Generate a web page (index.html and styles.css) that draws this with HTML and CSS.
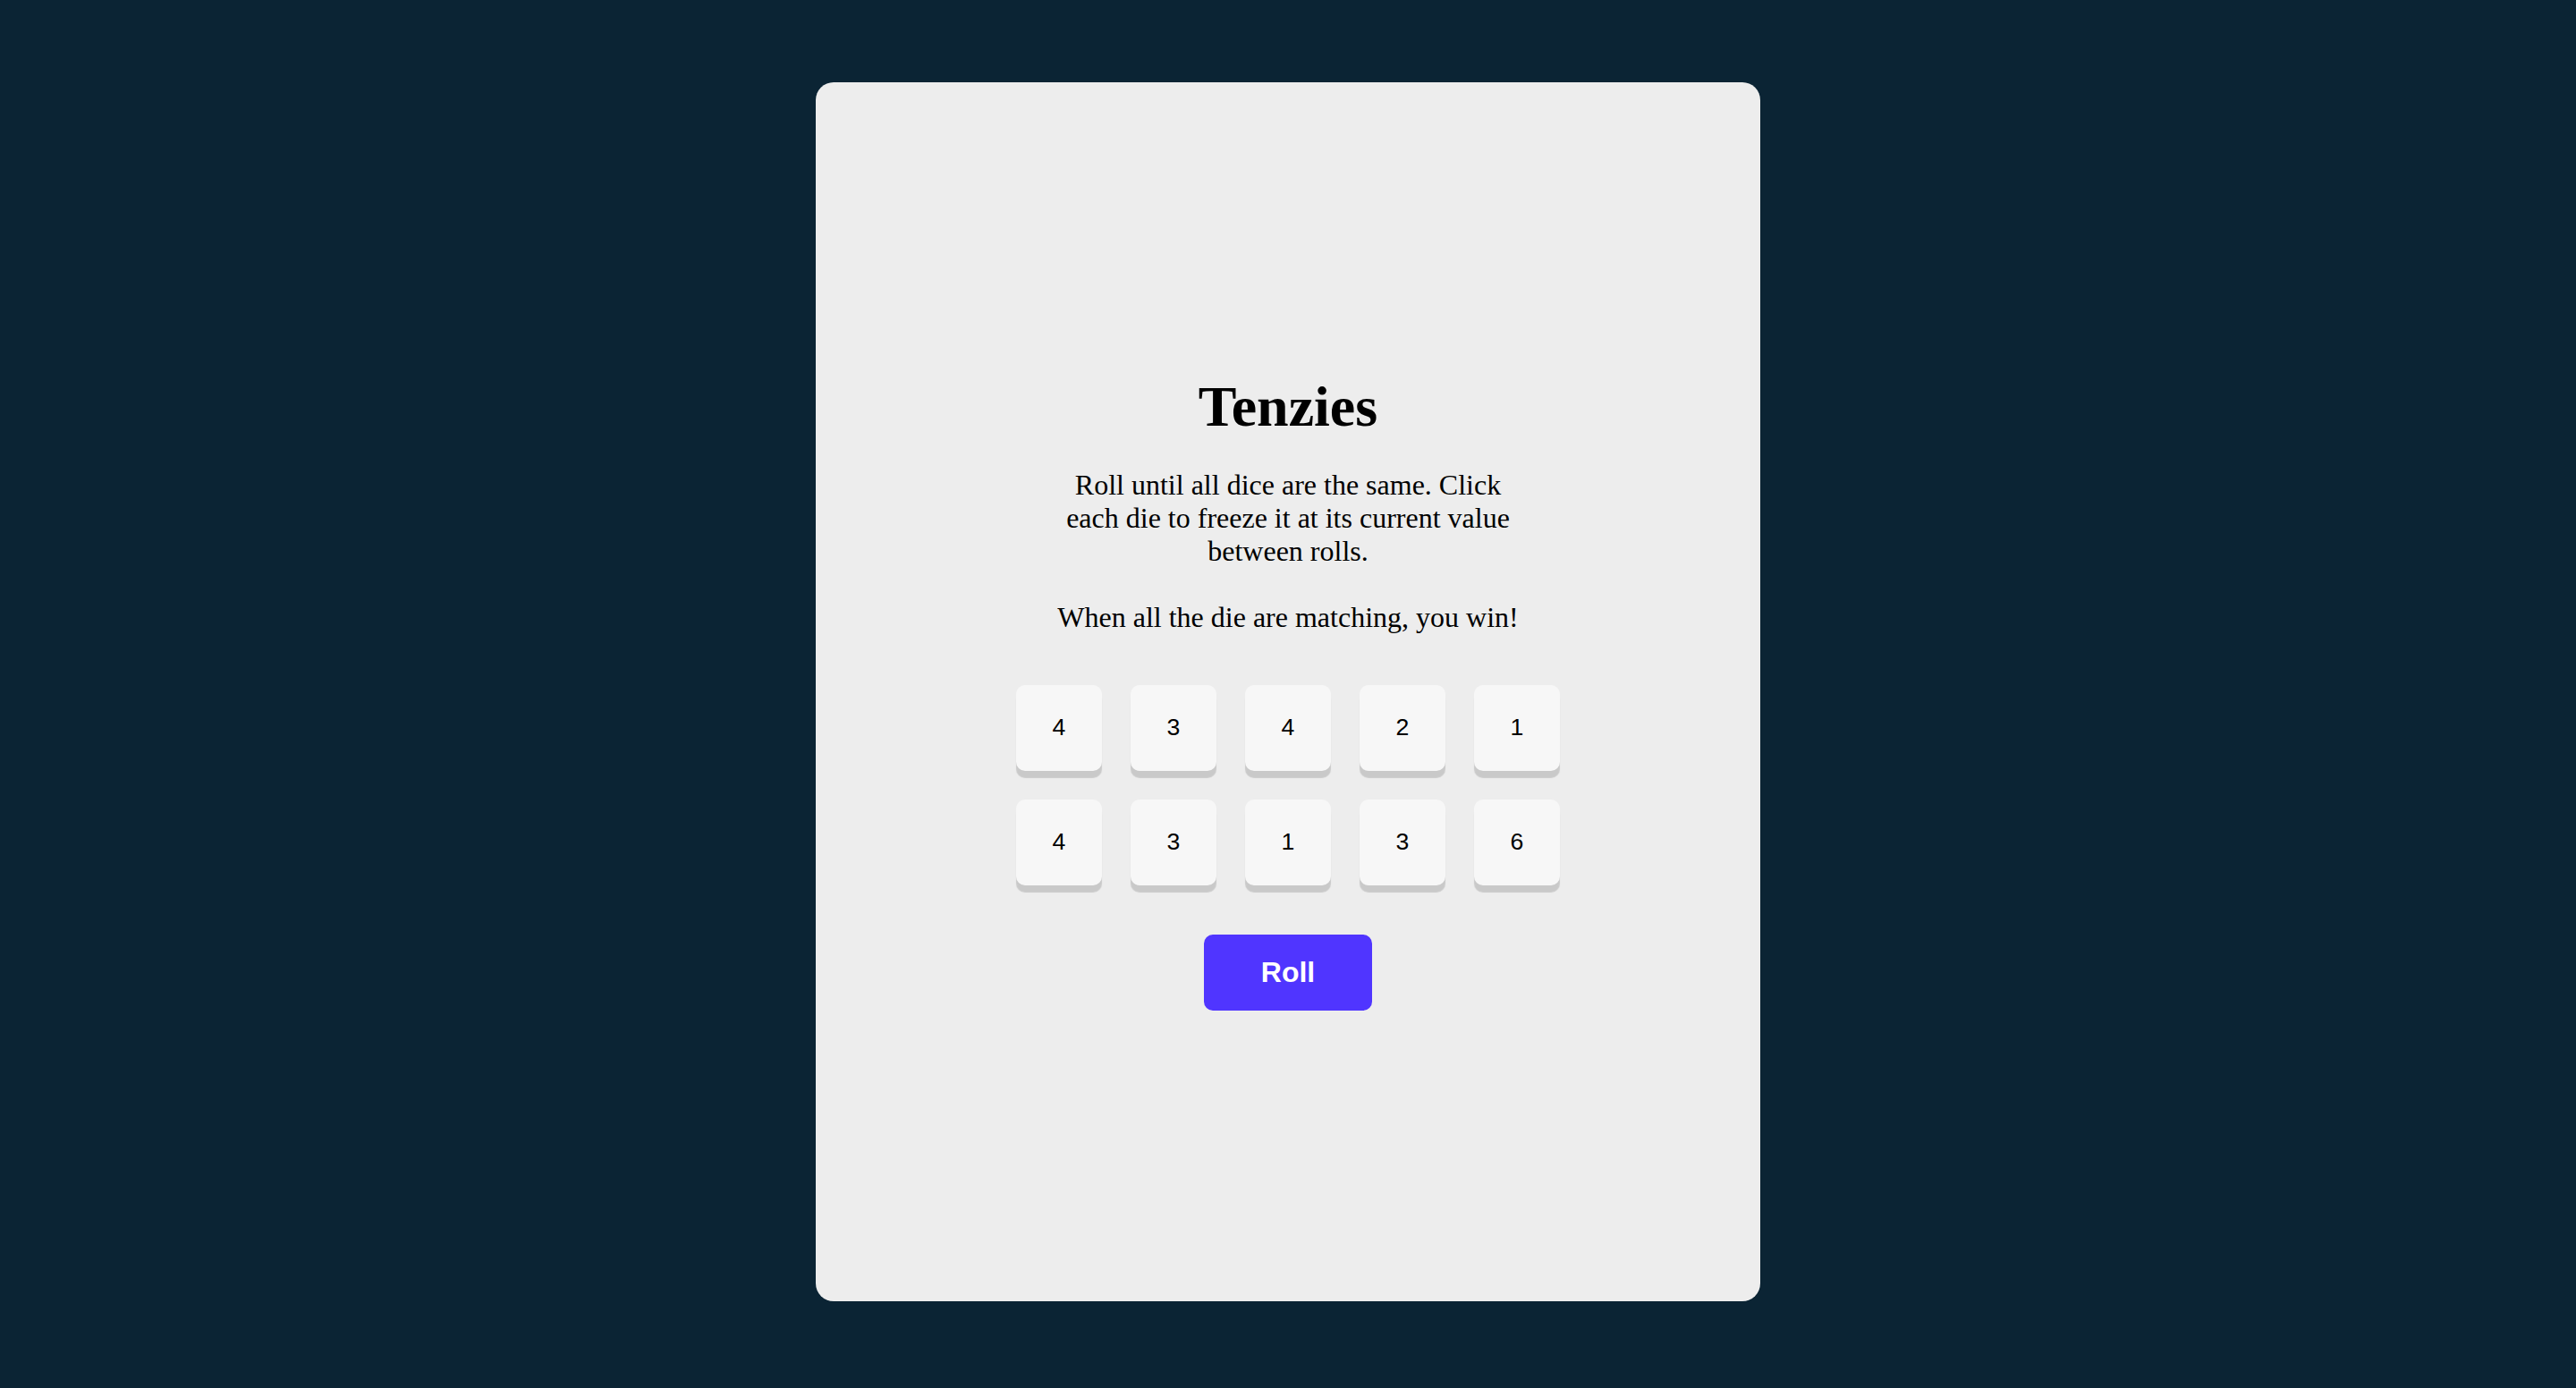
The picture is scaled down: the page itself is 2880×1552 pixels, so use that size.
FILE: index.html
```html
<!DOCTYPE html>
<html lang="en">
<head>
<meta charset="utf-8">
<title>Tenzies</title>
<link rel="stylesheet" href="styles.css">
</head>
<body>
<main class="card">
  <h1 class="title">Tenzies</h1>
  <p class="instructions">Roll until all dice are the same. Click each die to freeze it at its current value between rolls.<br><br>When all the die are matching, you win!</p>
  <div class="dice">
    <button class="die">4</button>
    <button class="die">3</button>
    <button class="die">4</button>
    <button class="die">2</button>
    <button class="die">1</button>
    <button class="die">4</button>
    <button class="die">3</button>
    <button class="die">1</button>
    <button class="die">3</button>
    <button class="die">6</button>
  </div>
  <button class="roll">Roll</button>
</main>
</body>
</html>
```

FILE: styles.css
```css
html, body {
  margin: 0;
  padding: 0;
}
body {
  background: #0b2434;
  font-family: "Liberation Serif", "Times New Roman", serif;
  padding-top: 92px;
  min-height: 1552px;
  box-sizing: border-box;
}
.card {
  width: 1056px;
  height: 1363px;
  margin: 0 auto;
  background: #ededed;
  border-radius: 20px;
  display: flex;
  flex-direction: column;
  align-items: center;
  justify-content: center;
  box-sizing: border-box;
}
.title {
  margin: 0;
  font-size: 64px;
  font-weight: bold;
  color: #000;
}
.instructions {
  margin: 32px 0 0;
  width: 540px;
  font-size: 32px;
  text-align: center;
  color: #000;
}
.dice {
  margin-top: 57px;
  display: grid;
  grid-template-columns: repeat(5, 96px);
  grid-auto-rows: 96px;
  gap: 32px;
}
.die {
  width: 96px;
  height: 96px;
  border: none;
  border-radius: 10px;
  background: #f7f7f7;
  box-shadow: 0 8px 1px rgba(0, 0, 0, 0.15);
  font-family: "Liberation Sans", Arial, sans-serif;
  font-size: 26.67px;
  color: #000;
  padding: 0;
}
.roll {
  margin-top: 55px;
  width: 188px;
  height: 85px;
  border: none;
  border-radius: 10px;
  background: #5035ff;
  color: #fff;
  font-family: "Liberation Sans", Arial, sans-serif;
  font-size: 32px;
  font-weight: bold;
  padding: 0;
}
```
